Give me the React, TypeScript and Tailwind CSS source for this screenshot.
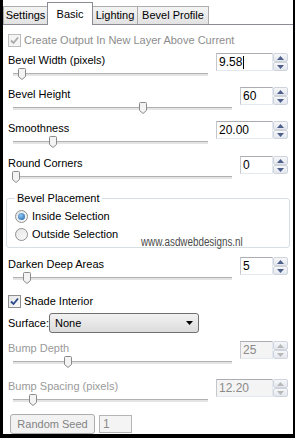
import React from 'react';

const font = "font-['Liberation_Sans',Arial,sans-serif]";

function Spinner({ disabled }: { disabled?: boolean }) {
  const arrow = disabled ? '#b8b8b8' : '#4d5f8a';
  return (
    <div className="flex w-[15px] flex-col">
      <div className="flex h-[9px] items-center justify-center rounded-[2px] border border-[#cfd4dc] bg-gradient-to-b from-[#f6f7f9] to-[#e3e7ee]">
        <svg width="7" height="4" viewBox="0 0 7 4">
          <path d="M0 4 L3.5 0 L7 4 Z" fill={arrow} />
        </svg>
      </div>
      <div className="flex h-[9px] items-center justify-center rounded-[2px] border border-[#cfd4dc] bg-gradient-to-b from-[#f6f7f9] to-[#e3e7ee]">
        <svg width="7" height="4" viewBox="0 0 7 4">
          <path d="M0 0 L3.5 4 L7 0 Z" fill={arrow} />
        </svg>
      </div>
    </div>
  );
}

function NumBox({ value, wide, disabled, cursor }: { value: string; wide?: boolean; disabled?: boolean; cursor?: boolean }) {
  return (
    <div className="flex items-start">
      <div
        className={`flex h-[18px] items-center border border-t-[#abadb3] border-l-[#c5c7cc] border-r-[#e3e9ef] border-b-[#e3e9ef] pl-[2px] text-[12px] leading-none ${
          wide ? 'w-[57px]' : 'w-[33px]'
        } ${disabled ? 'bg-[#f4f4f4] text-[#8a8a8a]' : 'bg-white text-black'}`}
      >
        {value}
        {cursor && <span className="ml-px inline-block h-[13px] w-px bg-black" />}
      </div>
      <Spinner disabled={disabled} />
    </div>
  );
}

function Slider({ pos }: { pos: number }) {
  return (
    <div className="relative ml-[5px] flex h-[12px] items-center">
      <div className="h-[3px] w-full border-t border-[#b0b0b0] bg-[#e4e4e4]" />
      <svg className="absolute top-0" style={{ left: pos - 13 - 4 }} width="8" height="12" viewBox="0 0 8 12">
        <path d="M0.5 1.5 Q0.5 0.5 1.5 0.5 L6.5 0.5 Q7.5 0.5 7.5 1.5 L7.5 8.5 L4 11.5 L0.5 8.5 Z" fill="#f3f3f3" stroke="#8a8a8a" />
      </svg>
    </div>
  );
}

function SliderBlock({
  label,
  value,
  wide,
  pos,
  disabled,
  cursor,
  className = '',
}: {
  label: string;
  value: string;
  wide?: boolean;
  pos: number;
  disabled?: boolean;
  cursor?: boolean;
  className?: string;
}) {
  return (
    <div className={`flex h-[34px] ${className}`}>
      <div className="flex flex-1 flex-col pr-[8px]">
        <div className={`h-[16px] text-[11px] leading-[16px] ${disabled ? 'text-[#9a9a9a]' : 'text-black'}`}>{label}</div>
        <Slider pos={pos} />
      </div>
      <div className="pt-px">
        <NumBox value={value} wide={wide} disabled={disabled} cursor={cursor} />
      </div>
    </div>
  );
}

function Radio({ checked, label }: { checked?: boolean; label: string }) {
  return (
    <div className="flex h-[18px] items-center gap-[4px]">
      <div className="flex h-[13px] w-[13px] items-center justify-center rounded-full border border-[#8e8f8f] bg-gradient-to-br from-[#e6e6e6] to-[#fafafa]">
        {checked && <div className="h-[7px] w-[7px] rounded-full bg-[radial-gradient(circle_at_40%_35%,#8fc7f2,#1b5ea8)]" />}
      </div>
      <span className="text-[11px] text-black">{label}</span>
    </div>
  );
}

export default function App() {
  const tabs = [
    { name: 'Settings', w: 'w-[45px]' },
    { name: 'Basic', w: 'w-[46px]', active: true },
    { name: 'Lighting', w: 'w-[46px]' },
    { name: 'Bevel Profile', w: 'w-[72px]' },
  ];

  return (
    <div className={`flex h-[438px] w-[295px] flex-col bg-black pb-[4px] pl-[3px] pr-[2px] ${font}`}>
      <div className="relative flex flex-1 flex-col bg-white">
        <div className="flex h-[25px] items-end border-b border-[#898c95] bg-white">
          {tabs.map((t, i) =>
            t.active ? (
              <div
                key={t.name}
                className={`z-10 -mb-px ${i > 0 ? '-ml-px' : ''} flex h-[23px] ${t.w} justify-center border border-b-0 border-[#898c95] bg-white pt-[3px] text-[11px] text-black`}
              >
                {t.name}
              </div>
            ) : (
              <div
                key={t.name}
                className={`${i > 0 ? '-ml-px' : ''} flex h-[18px] ${t.w} items-center justify-center border border-b-0 border-[#acacac] bg-gradient-to-b from-[#f4f4f4] to-[#e2e2e2] text-[11px] text-black`}
              >
                {t.name}
              </div>
            )
          )}
        </div>

        <div className="flex flex-col px-[5px]">
          <div className="mt-[7px] flex h-[16px] items-center gap-[3px]">
            <div className="flex h-[13px] w-[13px] items-center justify-center border border-[#bcbcbc] bg-[#f4f4f4]">
              <svg width="9" height="9" viewBox="0 0 9 9">
                <path d="M1 4.5 L3.5 7 L8 1.5" fill="none" stroke="#a8a8a8" strokeWidth="1.8" />
              </svg>
            </div>
            <span className="text-[11px] text-[#8d8d8d]">Create Output In New Layer Above Current</span>
          </div>

          <SliderBlock className="mt-[4px]" label="Bevel Width (pixels)" value="9.58" wide cursor pos={22} />
          <SliderBlock label="Bevel Height" value="60" pos={143} />
          <SliderBlock label="Smoothness" value="20.00" wide pos={53} />
          <SliderBlock className="mt-px" label="Round Corners" value="0" pos={16} />

          <fieldset className="mx-[-2px] mt-[1px] rounded-[3px] border border-[#d5dfe5] px-[8px] pb-[4px] pt-px">
            <legend className="px-[2px] text-[11px] leading-[16px] text-black">Bevel Placement</legend>
            <Radio checked label="Inside Selection" />
            <Radio label="Outside Selection" />
          </fieldset>

          <SliderBlock className="mt-[8px]" label="Darken Deep Areas" value="5" pos={27} />

          <div className="mt-[3px] flex h-[16px] items-center gap-[3px]">
            <div className="flex h-[13px] w-[13px] items-center justify-center border border-[#8e8f8f] bg-gradient-to-br from-[#e4e4e4] to-[#fbfbfb]">
              <svg width="9" height="9" viewBox="0 0 9 9">
                <path d="M1 4.5 L3.5 7 L8 1.5" fill="none" stroke="#27488a" strokeWidth="1.8" />
              </svg>
            </div>
            <span className="text-[11px] text-black">Shade Interior</span>
          </div>

          <div className="mt-[4px] flex h-[20px] items-center gap-[3px]">
            <span className="w-[38px] text-[11px] text-black">Surface:</span>
            <div className="flex h-[20px] w-[150px] items-center justify-between rounded-[3px] border border-[#707070] bg-gradient-to-b from-[#f2f2f2] to-[#dcdcdc] pl-[5px] pr-[5px] text-[11px] text-black">
              <span>None</span>
              <svg width="7" height="4" viewBox="0 0 7 4">
                <path d="M0 0 L3.5 4 L7 0 Z" fill="#000" />
              </svg>
            </div>
          </div>

          <SliderBlock className="mt-[7px]" label="Bump Depth" value="25" disabled pos={68} />
          <SliderBlock className="mt-[4px]" label="Bump Spacing (pixels)" value="12.20" wide disabled pos={33} />

          <div className="mt-[2px] flex items-center gap-[4px] pl-[2px]">
            <div className="flex h-[20px] w-[85px] items-center justify-center rounded-[3px] border border-[#adadad] bg-[#f2f2f2] text-[11px] text-[#838383]">
              Random Seed
            </div>
            <div className="flex h-[18px] w-[33px] items-center border border-[#b5b5b5] bg-[#f4f4f4] pl-[3px] text-[12px] text-[#8a8a8a]">
              1
            </div>
          </div>
        </div>

        <div className="absolute left-[138px] top-[235px] origin-left scale-x-[0.82] text-[12px] leading-[14px] text-[#4a4a4a]">
          www.asdwebdesigns.nl
        </div>
      </div>
    </div>
  );
}
